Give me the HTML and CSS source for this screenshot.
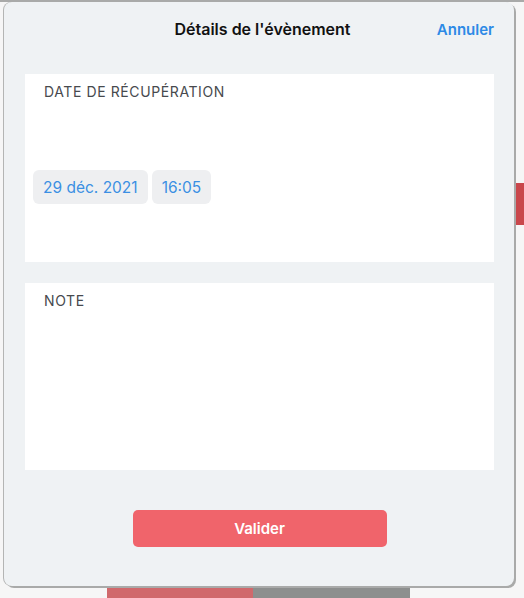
FILE: index.html
```html
<!DOCTYPE html>
<html lang="fr">
<head>
  <meta charset="UTF-8" />
  <meta name="viewport" content="width=device-width, initial-scale=1.0" />
  <title>Détails de l'évènement</title>
  <link rel="stylesheet" href="styles.css">
</head>
<body>
  <div class="backdrop">
    <span class="backdrop__tab"></span>
    <span class="backdrop__btn"></span>
    <span class="backdrop__bar"></span>
  </div>

  <main class="sheet">
    <header class="sheet__header">
      <h1 class="sheet__title">Détails de l'évènement</h1>
      <a href="#" class="sheet__cancel">Annuler</a>
    </header>

    <section class="card card--date">
      <h2 class="card__label">Date de récupération</h2>
      <div class="card__pickers">
        <button type="button" class="picker">29 déc. 2021</button>
        <button type="button" class="picker">16:05</button>
      </div>
    </section>

    <section class="card card--note">
      <h2 class="card__label">Note</h2>
    </section>

    <div class="sheet__footer">
      <button type="submit" class="sheet__btn">Valider</button>
    </div>
  </main>
</body>
</html>
```

FILE: styles.css
```css
body {
  margin: 0;
  font-family: 'Inter', 'Roboto', sans-serif;
  background-color: #f6f6f6;
  border-top: 2px solid #a9aaa9;
  color: #222;
  position: relative;
  height: 596px;
  overflow: hidden;
}

/* app visible behind the sheet */
.backdrop__tab {
  position: absolute;
  right: 0;
  top: 181px;
  width: 9px;
  height: 42px;
  background-color: #c9474b;
}

.backdrop__btn {
  position: absolute;
  left: 107px;
  top: 584px;
  width: 146px;
  height: 14px;
  background-color: #d0696c;
}

.backdrop__bar {
  position: absolute;
  left: 253px;
  top: 584px;
  width: 157px;
  height: 14px;
  background-color: #8d8f8e;
}

.sheet {
  position: relative;
  width: 510px;
  height: 584px;
  margin-left: 4px;
  box-sizing: border-box;
  background-color: #eff2f4;
  border-radius: 8px;
  box-shadow: -1px 0 0 #b4b5b4, 2px 2px 0 #a9aaa9;
  display: flex;
  flex-direction: column;
  padding: 0 20px 0 21px;
}

.sheet__header {
  height: 72px;
  display: flex;
  align-items: flex-start;
  justify-content: center;
  position: relative;
}

.sheet__title {
  margin: 17px 0 0 6px;
  font-size: 16px;
  font-weight: 600;
  color: #111;
}

.sheet__cancel {
  position: absolute;
  right: 0;
  top: 18px;
  font-size: 15px;
  font-weight: 600;
  color: #2d8ae6;
  text-decoration: none;
}

.card {
  background-color: #fff;
  box-sizing: border-box;
  padding: 10px 8px 0;
}

.card--date {
  height: 188px;
}

.card--note {
  height: 187px;
  margin-top: 21px;
}

.card__label {
  margin: 0 0 0 11px;
  font-size: 14px;
  font-weight: 400;
  line-height: 16px;
  letter-spacing: 0.6px;
  text-transform: uppercase;
  color: #474a4e;
}

.card__pickers {
  display: flex;
  gap: 4px;
  margin-top: 70px;
}

.picker {
  height: 34px;
  padding: 0 10px;
  border: none;
  border-radius: 6px;
  background-color: #eeeff1;
  font-family: inherit;
  font-size: 15.5px;
  color: #3b8fe3;
}

.sheet__footer {
  display: flex;
  justify-content: center;
  margin-top: 40px;
}

.sheet__btn {
  width: 254px;
  height: 37px;
  border: none;
  border-radius: 5px;
  background-color: #f0646b;
  color: #fff;
  font-family: inherit;
  font-size: 15px;
  font-weight: 600;
  cursor: pointer;
}
```
